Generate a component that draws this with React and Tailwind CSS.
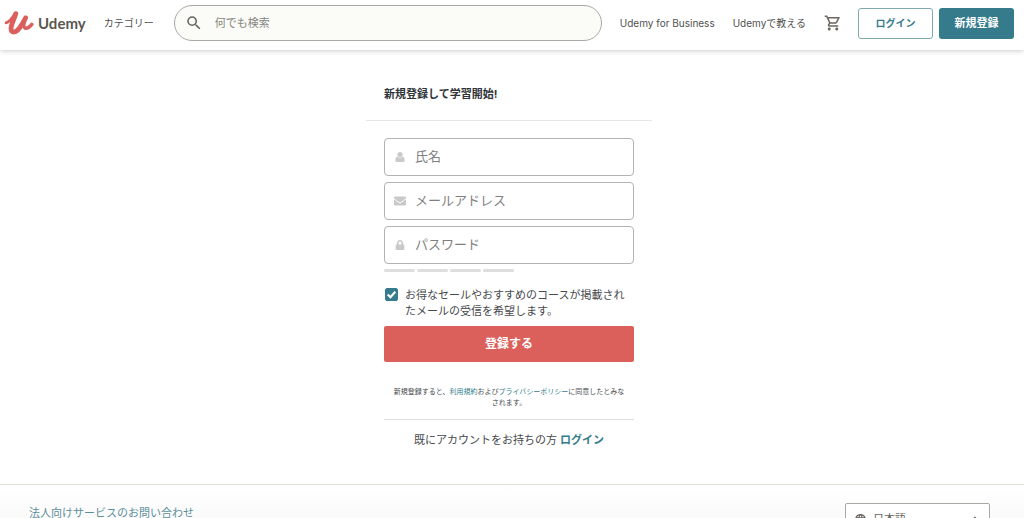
import React from "react";
import { FaEnvelope, FaLock } from "react-icons/fa";
import { MdSearch, MdOutlineShoppingCart, MdLanguage, MdArrowDropUp } from "react-icons/md";

function PersonIcon({ size }) {
  return (
    <svg width={size} height={size} viewBox="0 0 10 10" fill="currentColor" aria-hidden="true">
      <circle cx="5" cy="2.600" r="2.600" />
      <path d="M2.400 4.600C3.800 6.200 6.200 6.200 7.600 4.600C9 4.800 9.600 6.400 9.600 8.200C9.600 9.300 9 10 8 10H2C1 10 .4 9.300 .4 8.200C.4 6.400 1 4.800 2.400 4.600Z" />
    </svg>
  );
}

const fields = [
  { id: "name", type: "text", label: "氏名", Icon: PersonIcon, size: 10 },
  { id: "email", type: "email", label: "メールアドレス", Icon: FaEnvelope, size: 12 },
  { id: "password", type: "password", label: "パスワード", Icon: FaLock, size: 10 },
];

function Logo() {
  return (
    <a href="#" className="flex shrink-0 items-center gap-1 text-[#5b564f]">
      <svg width="30" height="26" viewBox="0 0 30 26" fill="none" stroke="#db5f5c" strokeLinecap="round" strokeLinejoin="round" aria-hidden="true">
        <path d="M2.200 12.800C5.500 11.800 8.500 8 11 3.800" strokeWidth="3" />
        <path d="M11.800 3.600C10.500 8.500 7 14.500 7 18.500C7 24 12 22.500 15.500 18C18.500 14 20 11 21.500 8" strokeWidth="4.800" />
        <path d="M21.800 7.500C20.500 11 18.500 16.800 21 18C23.200 18.800 25.500 17 27.800 14.300" strokeWidth="3.600" />
      </svg>
      <span className="font-[Lato,sans-serif] text-[15px] font-bold">Udemy</span>
    </a>
  );
}

function Header() {
  return (
    <header className="relative flex h-[50px] shrink-0 items-center bg-white pr-[10px] pb-1 pl-1 text-[11px] text-[#505050] shadow-[0_1px_5px_rgba(0,0,0,0.2)]">
      <Logo />
      <a href="#" className="ml-[18px] shrink-0 text-[10px]">カテゴリー</a>
      <form role="search" className="mr-[18px] ml-5 flex h-9 min-w-0 flex-1 items-center gap-3 rounded-full border border-[#a9a9a3] bg-[#fbfbf8] pl-[10px]">
        <MdSearch size={18} className="shrink-0 text-[#66625c]" aria-hidden="true" />
        <input type="search" aria-label="何でも検索" placeholder="何でも検索" className="min-w-0 flex-1 bg-transparent outline-none placeholder:text-[#85857f]" />
      </form>
      <nav className="flex shrink-0 items-center gap-[18px] text-[10px]">
        <a href="#">Udemy for Business</a>
        <a href="#">Udemyで教える</a>
        <a href="#" aria-label="カート"><MdOutlineShoppingCart size={18} className="text-[#6b665f]" /></a>
      </nav>
      <div className="ml-4 flex shrink-0 gap-[6px] font-bold">
        <button type="button" className="h-[31px] w-[75px] rounded-[3px] border border-[#7fa9b2] bg-white text-[10px] text-[#357b8b]">ログイン</button>
        <button type="button" className="h-[31px] w-[75px] rounded-[3px] bg-[#357b8b] text-white">新規登録</button>
      </div>
    </header>
  );
}

function SignupCard() {
  return (
    <section className="mx-auto w-full max-w-[286px]">
      <h1 className="border-b border-[#e6e6e6] px-[18px] pt-9 pb-[18px] text-[11px] leading-4 font-bold text-[#2f3439]">新規登録して学習開始!</h1>
      <div className="px-[18px] pt-[17px] text-[11px] text-[#46494d]">
        <form>
          <div className="flex flex-col gap-[6px]">
            {fields.map(({ id, type, label, Icon, size }) => (
              <div key={id} className="flex h-[38px] items-center rounded-[4px] border border-[#b2b2b2] bg-white">
                <label htmlFor={id} aria-label={label} className="flex w-[30px] justify-center text-[#c9c9c9]"><Icon size={size} /></label>
                <input id={id} type={type} placeholder={label} className="min-w-0 flex-1 bg-transparent text-[13px] outline-none placeholder:text-[#7f7f7f]" />
              </div>
            ))}
          </div>
          <div className="mt-[5px] flex gap-[2px]" aria-hidden="true">
            {[0, 1, 2, 3].map((n) => <span key={n} className="h-[3px] w-[31px] rounded-sm bg-[#dedede]" />)}
          </div>
          <div className="mt-[15px] flex items-start gap-[7px]">
            <span className="relative mt-[1px] ml-[1px] flex size-[13px] shrink-0">
              <input id="offers" type="checkbox" defaultChecked className="peer size-[13px] appearance-none rounded-[2px] border border-[#357b8b] checked:bg-[#357b8b]" />
              <svg viewBox="0 0 12 12" className="pointer-events-none absolute inset-0 hidden size-[13px] peer-checked:block" fill="none" stroke="white" strokeWidth="2" aria-hidden="true"><path d="M2.500 6L5 8.500L9.500 3.500" /></svg>
            </span>
            <label htmlFor="offers" className="leading-4">お得なセールやおすすめのコースが掲載されたメールの受信を希望します。</label>
          </div>
          <button type="submit" className="mt-[7px] h-9 w-full rounded-[2px] bg-[#db5f5a] text-xs font-bold text-white">登録する</button>
        </form>
        <div className="mt-6 border-b border-[#dedede] px-2 pb-[11px] text-center text-[7px] leading-[11px]">
          <p>
            新規登録すると、<a href="#" className="text-[#357b8b]">利用規約</a>および<a href="#" className="text-[#357b8b]">プライバシーポリシー</a>に同意したとみなされます。
          </p>
        </div>
        <p className="pt-3 text-center leading-4">既にアカウントをお持ちの方 <a href="#" className="font-bold text-[#357b8b]">ログイン</a></p>
      </div>
    </section>
  );
}

export default function App() {
  return (
    <div lang="ja" className="flex h-screen flex-col overflow-hidden bg-white font-[Inter,'Noto_Sans_CJK_JP',sans-serif]">
      <Header />
      <main className="shrink-0 pr-[6px] pb-9"><SignupCard /></main>
      <footer className="flex shrink-0 items-start justify-between border-t border-[#e2e1d9] bg-linear-to-b from-white to-[#f5f5f5] pt-[18px] pr-[34px] pb-6 pl-[29px] text-[11px]">
        <a href="#" className="mt-[2px] leading-4 text-[#5b8e9a]">法人向けサービスのお問い合わせ</a>
        <label className="flex h-8 w-[145px] items-center gap-[6px] rounded-[2px] border border-[#a9a9a3] bg-white px-2 text-[#66625c]">
          <MdLanguage size={13} className="shrink-0" aria-hidden="true" />
          <select aria-label="言語" className="min-w-0 flex-1 appearance-none bg-transparent outline-none"><option>日本語</option></select>
          <MdArrowDropUp size={12} className="mb-[2px] shrink-0" aria-hidden="true" />
        </label>
      </footer>
    </div>
  );
}
